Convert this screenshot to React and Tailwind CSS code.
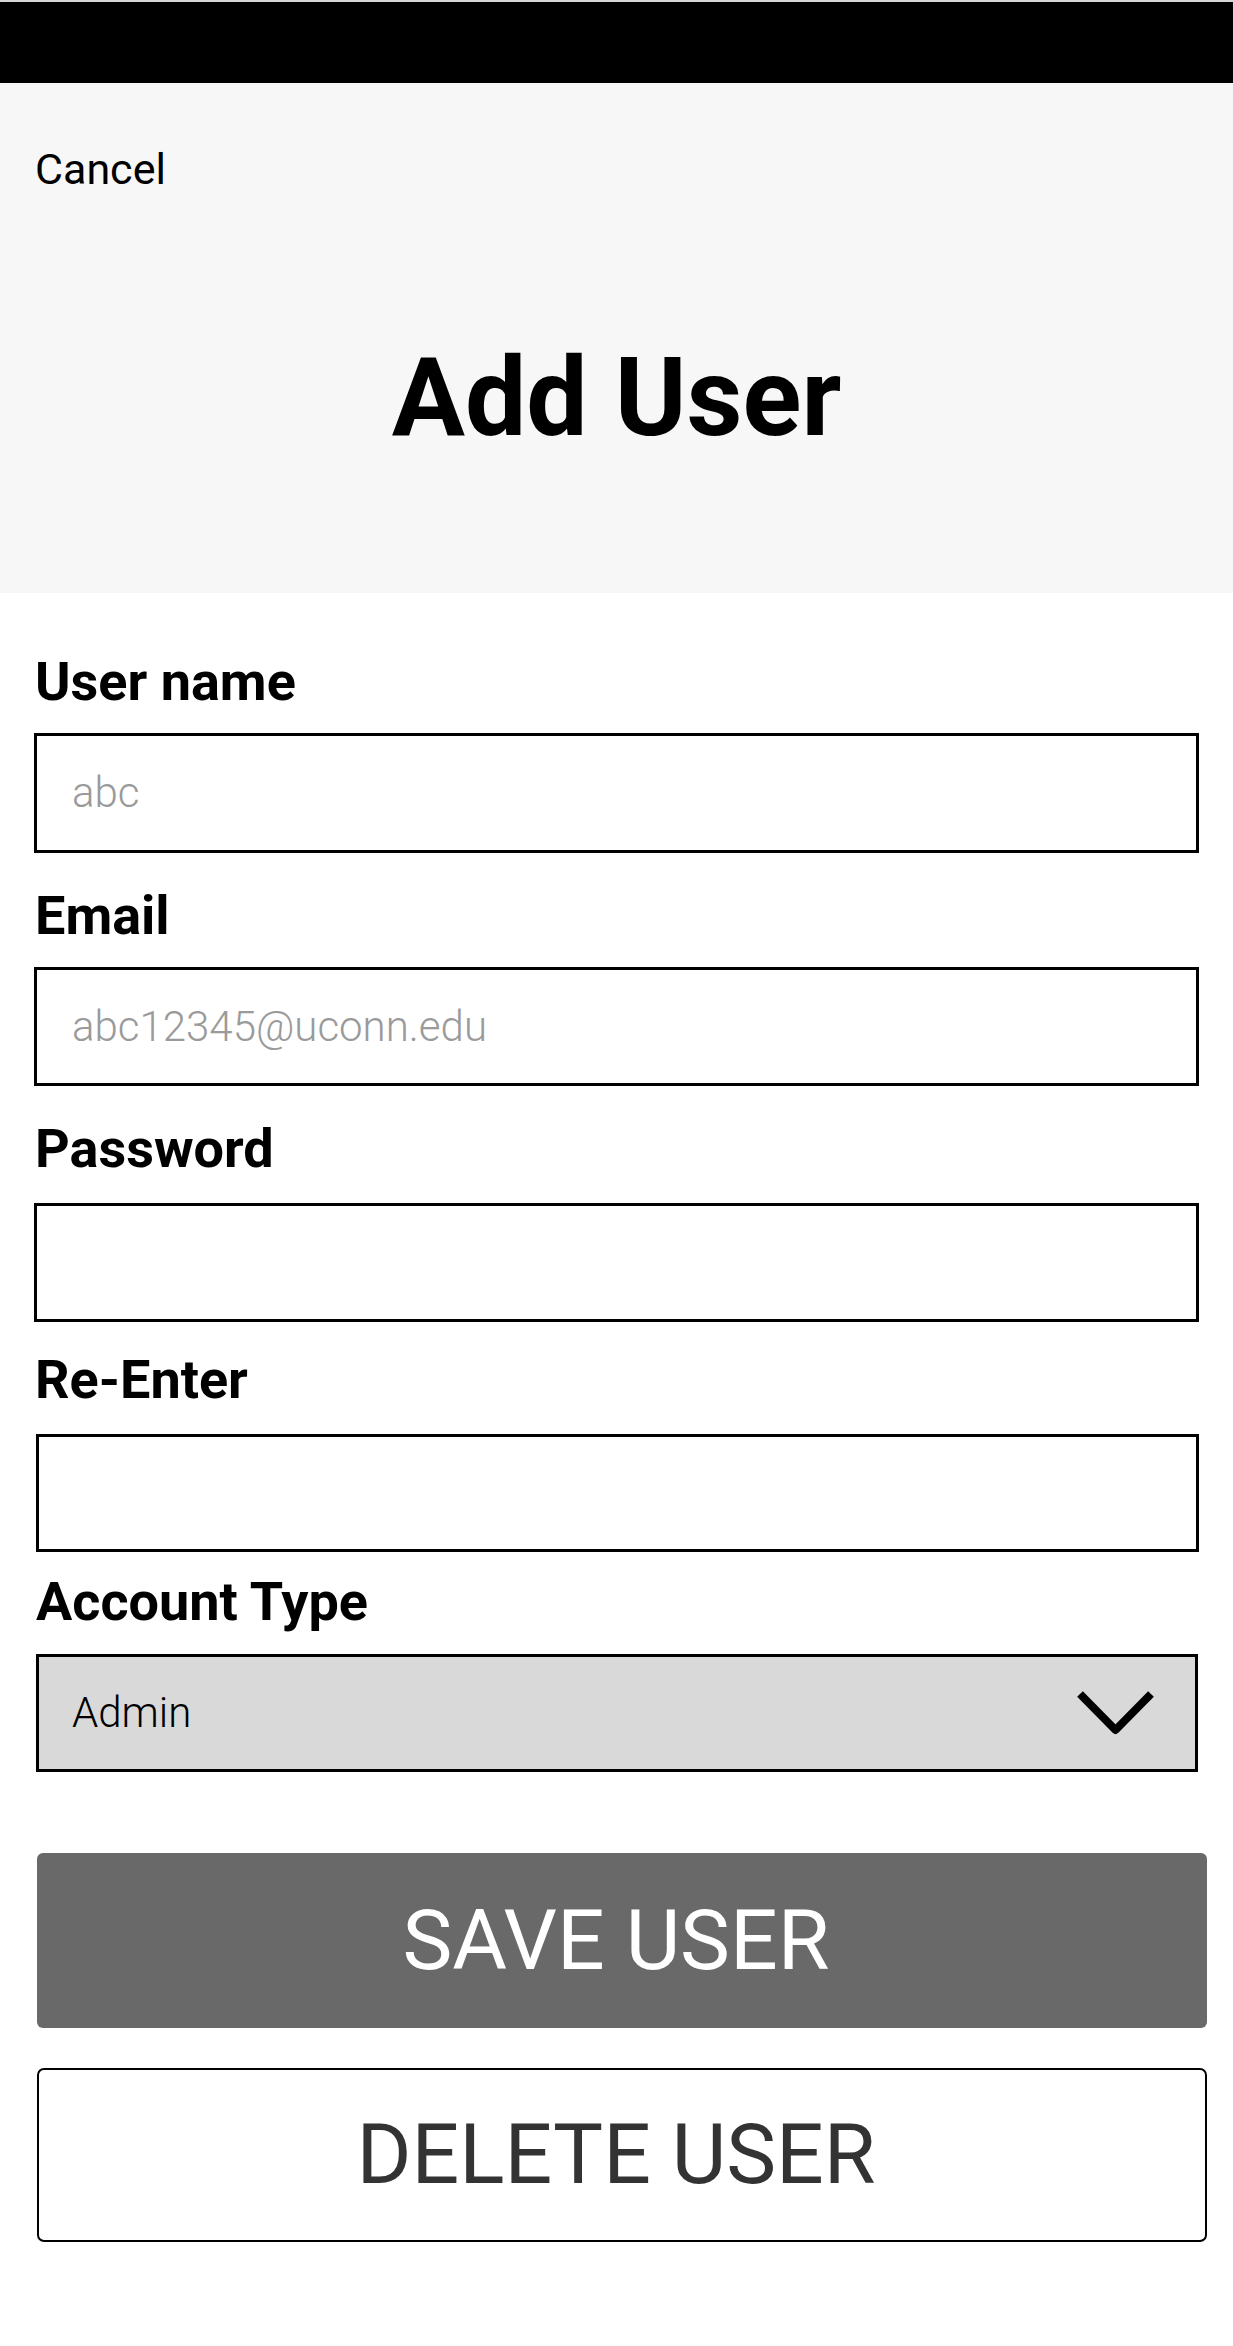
const fields = [
  { label: 'User name', placeholder: 'abc', top: 'mt-[62px]', gap: 'mb-[24px]', h: 'h-[120px]', ml: 'ml-0' },
  { label: 'Email', placeholder: 'abc12345@uconn.edu', top: 'mt-[36px]', gap: 'mb-[24px]', h: 'h-[119px]', ml: 'ml-0' },
  { label: 'Password', placeholder: '', top: 'mt-[36px]', gap: 'mb-[27px]', h: 'h-[119px]', ml: 'ml-0' },
  { label: 'Re-Enter', placeholder: '', top: 'mt-[31px]', gap: 'mb-[27px]', h: 'h-[118px]', ml: 'ml-[2px]' },
];

const Chevron = () => (
  <svg width="81" height="49" viewBox="0 0 81 49" fill="none">
    <polyline points="5,5 40.5,41 76,5" stroke="black" strokeWidth="8" strokeLinejoin="round" />
  </svg>
);

export default function App() {
  return (
    <div className="min-h-[2346px] w-full bg-white font-['Roboto',sans-serif] text-black">
      {/* status bar */}
      <div className="h-[83px] border-t-[2px] border-[#d6d6d6] bg-black" />

      {/* header */}
      <div className="flex flex-col bg-[#f7f7f7] pt-[65px] pb-[140px]">
        <div className="pl-[35px] text-[43px] leading-none">Cancel</div>
        <h1 className="mt-[153px] text-center text-[109px] font-bold leading-none">Add User</h1>
      </div>

      {/* form */}
      <div className="flex flex-col px-[34px]">
        {fields.map((f) => (
          <div key={f.label} className={`flex flex-col ${f.top}`}>
            <label className={`${f.gap} pl-[1px] text-[54px] font-bold leading-none`}>{f.label}</label>
            <div className={`${f.h} ${f.ml} flex items-center border-[3px] border-black bg-white pl-[35px]`}>
              <span className="text-[42px] font-light leading-none text-[#9a9a9a]">{f.placeholder}</span>
            </div>
          </div>
        ))}

        <div className="mt-[23px] flex flex-col">
          <label className="mb-[25px] pl-[2px] text-[54px] font-bold leading-none">Account Type</label>
          <div className="ml-[2px] mr-[1px] flex h-[118px] items-center justify-between border-[3px] border-black bg-[#d9d9d9] pl-[33px] pr-[39px]">
            <span className="text-[42px] font-light leading-none text-black">Admin</span>
            <Chevron />
          </div>
        </div>
      </div>

      {/* actions */}
      <div className="mt-[81px] flex flex-col pl-[37px] pr-[26px]">
        <button className="flex h-[175px] items-center justify-center rounded-[6px] bg-[#696969] pr-[12px] text-[84px] leading-none text-white">
          SAVE USER
        </button>
        <button className="mt-[40px] flex h-[174px] items-center justify-center rounded-[7px] border-[2px] border-black bg-white pr-[12px] text-[84px] leading-none text-[#333333]">
          DELETE USER
        </button>
      </div>
    </div>
  );
}
